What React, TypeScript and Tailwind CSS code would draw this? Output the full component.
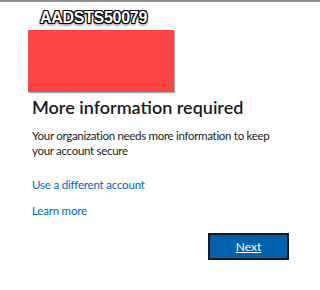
import React from "react";

export default function App() {
  return (
    <div className="w-[320px] h-[290px] bg-white border-t-2 border-[#8f8f8f] font-['Lato','Noto_Sans',sans-serif] text-[#1b1b1b]">
      <div className="pl-[40px] pt-[6px] h-[28px] font-['Liberation_Sans',sans-serif] font-bold text-[16px] leading-[20px] tracking-[-0.3px] text-white [text-shadow:-1px_-1px_0_#000,1px_-1px_0_#000,-1px_1px_0_#000,1px_1px_0_#000,0_2px_3px_rgba(0,0,0,0.7)]">
        AADSTS50079
      </div>
      <div className="ml-[28px] w-[146px] h-[62px] bg-[#fe4545] shadow-[1px_1px_1px_rgba(60,90,90,0.5)]" />
      <div className="pl-[32px] pr-[20px]">
        <h1 className="mt-[3px] text-[18px] leading-[24px] font-semibold">More information required</h1>
        <p className="mt-[9px] text-[11.5px] leading-[15px] tracking-[-0.3px] w-[250px]">
          Your organization needs more information to keep your account secure
        </p>
        <div className="mt-[19px] text-[11.5px] leading-[16px] tracking-[-0.2px] text-[#0067b8]">Use a different account</div>
        <div className="mt-[10px] text-[11.5px] leading-[16px] tracking-[-0.2px] text-[#0067b8]">Learn more</div>
        <div className="flex justify-end pr-[11px] mt-[14px]">
          <button className="w-[81px] h-[27px] bg-[#0062ad] border-2 border-[#1a1a1a] text-white text-[12px] underline">
            Next
          </button>
        </div>
      </div>
    </div>
  );
}
